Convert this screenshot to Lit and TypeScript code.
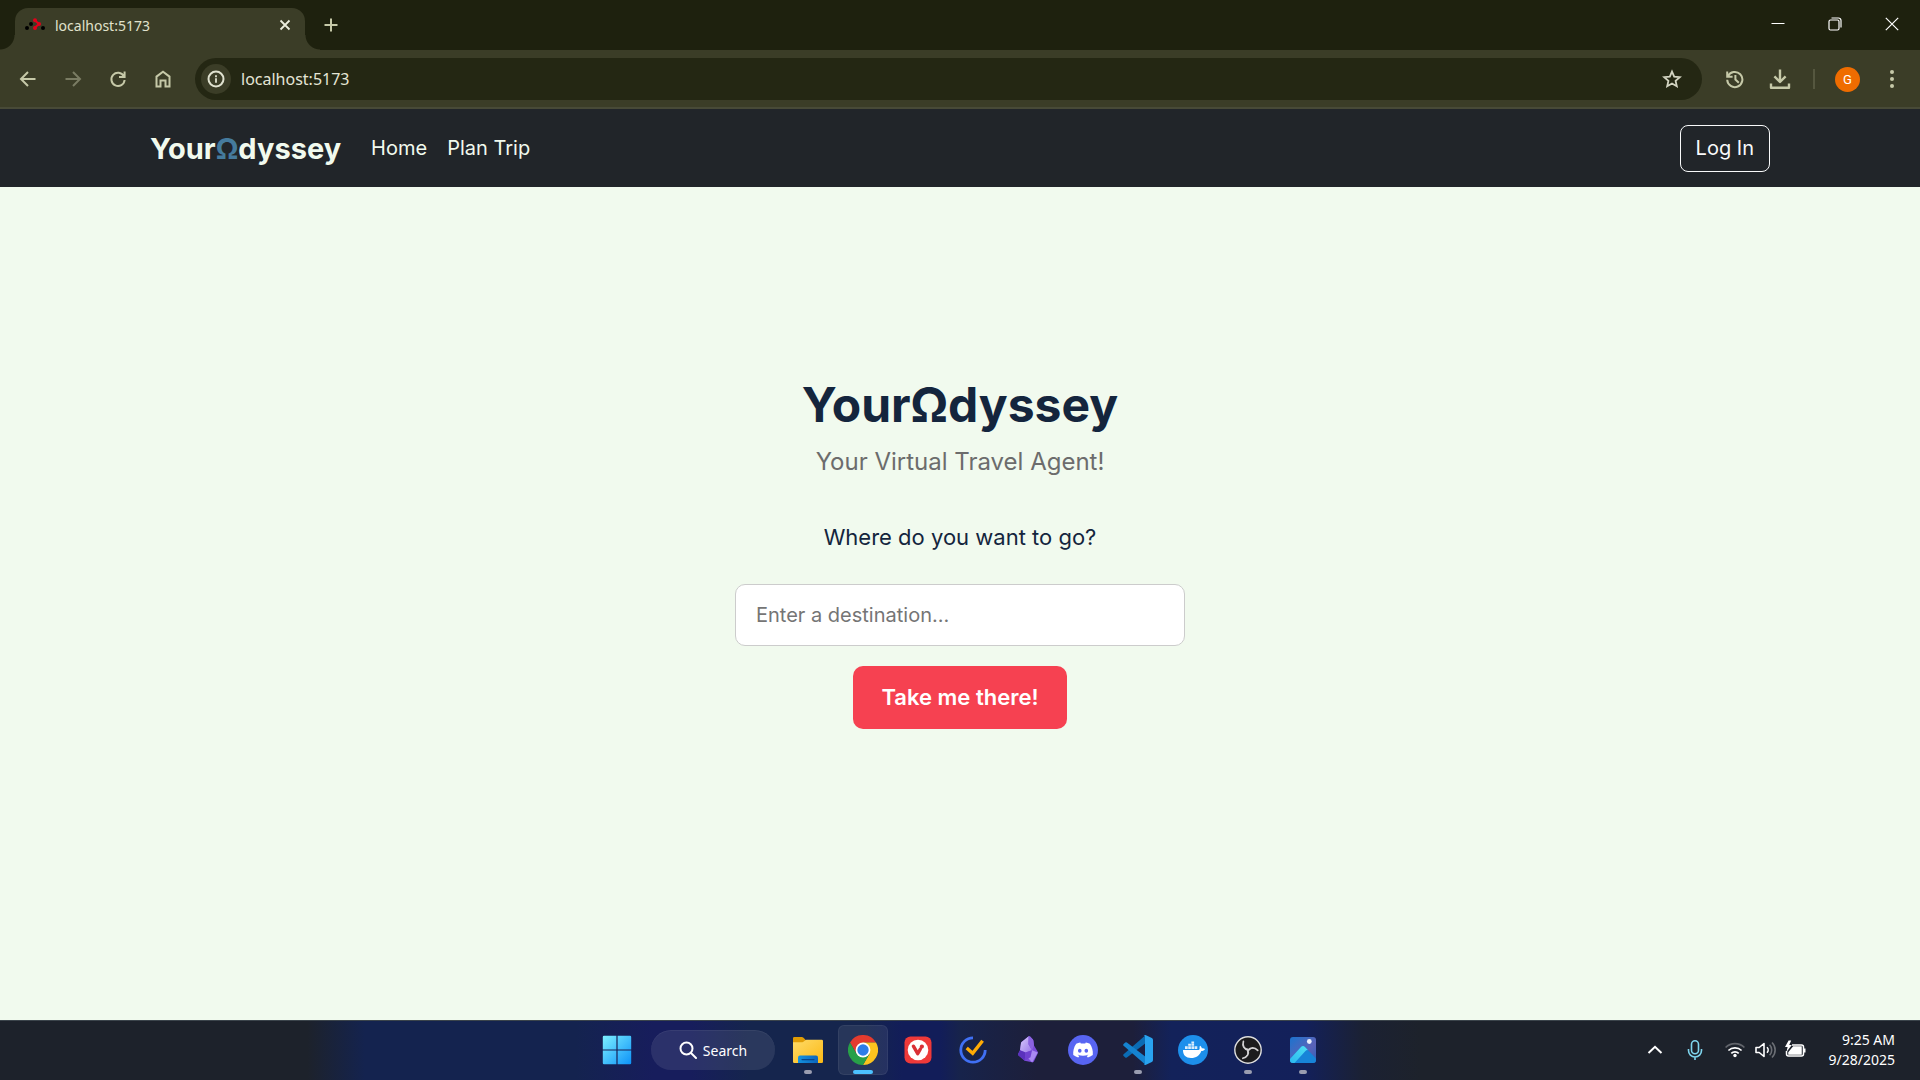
import { LitElement, html, css, svg } from "lit";
import { customElement } from "lit/decorators.js";
import { classMap } from "lit/directives/class-map.js";

/* ---------- line icons, drawn on a 20 or 24 unit grid ---------- */

const line = (size: number, body: unknown, width = 2) => html`
  <svg width=${size} height=${size} viewBox="0 0 ${size} ${size}" fill="none" stroke="currentColor"
    stroke-width=${width} aria-hidden="true">${body}</svg>`;

const icons = {
  tabClose: line(12, svg`<path d="M1.5 1.5l9 9M10.5 1.5l-9 9"/>`, 1.8),
  plus: line(14, svg`<path d="M7 .5v13M.5 7h13"/>`),
  back: line(20, svg`<path d="M17.5 10H3.5M10 3l-7 7 7 7"/>`),
  forward: line(20, svg`<path d="M2.5 10h14M10 3l7 7-7 7"/>`),
  reload: line(20, svg`<path d="M16.6 2.5v5.6H11M15.8 7.2A6.6 6.6 0 1 0 16.6 11"/>`),
  home: line(20, svg`<path d="M3.5 17.5V7.6L10 2.7l6.500 4.900v9.900h-4v-6h-5v6z"/>`),
  info: line(20, svg`<circle cx="10" cy="10" r="7.5"/><path d="M10 9.2v4.600M10 6.200v2" stroke-width="1.800"/>`),
  star: line(20, svg`<path d="M10 2.600l2.200 5.100 5.600.500-4.200 3.700 1.200 5.400-4.800-2.800-4.800 2.800 1.200-5.400-4.200-3.700 5.600-.5z" stroke-width="1.800"/>`),
  history: line(20, svg`<path d="M2.200 2.400v5.300h5.400M2.900 7.300A7.600 7.600 0 1 1 2.200 10.800M10.400 6v4.600l3.400 3.200"/>`),
  download: line(24, svg`<path d="M12 2.500v12M6.400 9.400L12 15l5.600-5.600M3 16.500v4.200h18v-4.200" stroke-width="2.400" stroke-linejoin="round"/>`),
  dots: html`<svg width="6" height="20" viewBox="0 0 6 20" fill="currentColor" aria-hidden="true">
    <circle cx="3" cy="3" r="2"/><circle cx="3" cy="10" r="2"/><circle cx="3" cy="17" r="2"/></svg>`,
  minimize: line(14, svg`<path d="M.5 6.500h13"/>`, 1),
  restore: line(14, svg`<rect x="1" y="3" width="10" height="10" rx="1.500"/><path d="M3.500 1h7A2.500 2.500 0 0 1 13 3.500v7"/>`, 1.2),
  close: line(14, svg`<path d="M.8.800l12.400 12.400M13.200.800L.8 13.200"/>`, 1.2),
  search: line(18, svg`<circle cx="7.500" cy="7.500" r="6"/><path d="M12 12l5 5" stroke-linecap="round"/>`),
  chevron: line(24, svg`<path d="M5.500 15L12 8.800l6.500 6.200"/>`),
  mic: line(24, svg`<rect x="8.500" y="2.800" width="7" height="13" rx="3.500"/><path d="M5.500 11v1.500a6.500 6.500 0 0 0 13 0V11M12 19v3"/>`, 1.6),
  wifi: line(24, svg`
    <path d="M2.600 9.500a13.300 13.300 0 0 1 18.800 0" opacity=".3"/>
    <path d="M5.400 12.500a9.400 9.400 0 0 1 13.200 0M8.300 15.300a5.300 5.300 0 0 1 7.400 0"/>
    <circle cx="12" cy="17.500" r="1.700" fill="currentColor" stroke="none"/>`, 1.7),
  speaker: line(24, svg`
    <path d="M3 9.500h3.200l4.800-4v13l-4.800-4H3z" stroke-linejoin="round"/>
    <path d="M14 9.200a4 4 0 0 1 0 5.600"/>
    <path d="M16.600 6.800a7.400 7.400 0 0 1 0 10.400M19 4.500a10.500 10.500 0 0 1 0 15" opacity=".35"/>`, 1.6),
  battery: line(24, svg`
    <path d="M9 7h9.500a2 2 0 0 1 2 2v7a2 2 0 0 1-2 2H5.500a2 2 0 0 1-2-2v-3"/>
    <path d="M10.500 9h7.500v7H6v-1.500z" fill="currentColor"/>
    <path d="M21.500 10.500v4" stroke-width="2"/>
    <path d="M5.600 2.500L2 9h2.600L3.500 14 8.800 7H6.200l2-4.500z" fill="currentColor" stroke="none"/>`, 1.5),
};

/* ---------- colour logos, drawn on a 30 unit grid ---------- */

const logo = (body: unknown) => html`
  <svg width="30" height="30" viewBox="0 0 30 30" aria-hidden="true">${body}</svg>`;

const chromePiece = "M15 7.500H28A15 15 0 0 0 2 7.500L8.500 18.750 15 15z";
const obsBlade = "M15 15.200C11 14.500 8.600 10.500 10.900 6.200 9.500 11 12 13.400 15.600 13.700z";

const logos = {
  windows: logo(svg`
    <defs><linearGradient id="w" x1="0" y1="0" x2="1" y2="1" gradientUnits="objectBoundingBox">
      <stop offset="0" stop-color="#7df0ff"/><stop offset="1" stop-color="#0d92f8"/></linearGradient></defs>
    <path fill="url(#w)" d="M.8 2Q.8.800 2 .800h12.400v13.600H.800zM15.600.800H28q1.200 0 1.200 1.200v12.400H15.600zM.8 15.600h13.600v13.600H2Q.800 29.200.800 28zM15.600 15.600h13.600V28q0 1.200-1.200 1.200H15.600z"/>`),
  files: logo(svg`
    <defs>
      <linearGradient id="f" x1="0" y1="0" x2="1" y2="1"><stop offset="0" stop-color="#ffdb68"/><stop offset="1" stop-color="#fbb915"/></linearGradient>
      <linearGradient id="fb" x1="0" y1="0" x2="1" y2="0"><stop offset="0" stop-color="#1493e0"/><stop offset="1" stop-color="#0c64bd"/></linearGradient>
    </defs>
    <path fill="#e09c05" d="M0 3.300Q0 2 1.300 2h7.500q1 0 1.700.700L13 5.200 11 9H0z"/>
    <path fill="url(#f)" d="M0 7.200h9.200q.9 0 1.500-.6L12 5.400q.6-.6 1.500-.6h15.200q1.300 0 1.300 1.300v20.600q0 1.300-1.300 1.300H1.300Q0 28 0 26.700z"/>
    <path fill="url(#fb)" d="M5 28v-5.500Q5 20.500 7 20.500h16q2 0 2 2V28z"/>
    <path d="M9 24.600h12" stroke="#07458c" stroke-width="1.200" stroke-linecap="round"/>`),
  chrome: logo(svg`
    <path fill="#e33b2e" d=${chromePiece}/>
    <path fill="#fcc31e" d=${chromePiece} transform="rotate(120 15 15)"/>
    <path fill="#28a048" d=${chromePiece} transform="rotate(240 15 15)"/>
    <circle cx="15" cy="15" r="7.400" fill="#fff"/><circle cx="15" cy="15" r="5.700" fill="#2c7de9"/>`),
  vivaldi: logo(svg`
    <rect x="1.500" y="1.500" width="27" height="27" rx="6" fill="#ef3939"/>
    <circle cx="15" cy="15" r="10.300" fill="#fff"/>
    <path d="M10.400 11.200l4.300 7.500 2.700-4.700" fill="none" stroke="#d92f35" stroke-width="3.400" stroke-linecap="round" stroke-linejoin="round"/>
    <circle cx="18.900" cy="11.600" r="2.100" fill="#d92f35"/>`),
  ticktick: logo(svg`
    <path d="M15 2.800a12.200 12.200 0 1 0 12.200 12.200" fill="none" stroke="#4070f4" stroke-width="2.800"/>
    <path d="M8.700 13l6 5.200L24.600 5.800" fill="none" stroke="#ffab05" stroke-width="3.400"/>`),
  obsidian: logo(svg`
    <defs><linearGradient id="o" x1="0" y1="0" x2="1" y2="1"><stop offset="0" stop-color="#d9ccfb"/><stop offset="1" stop-color="#9a78ea"/></linearGradient></defs>
    <path fill="#7a4bd8" d="M15.700 1.300q.8-.3 1.400.3l2.600 2.600q.6.600.7 1.500l.6 4.800 3.700 6.300q.5.800 0 1.700l-3.700 7.800q-.5 1.300-1.900 1L11.700 25.700 5.300 20.300q-.6-.6-.2-1.300L7 15.300l1-7.200q.1-.7.600-1.200z"/>
    <path fill="url(#o)" d="M15.700 1.300L8.600 6.900q-.5.500-.6 1.200L7 15.300l5.500 2.200 6.500-2.300-3.500-6z"/>
    <path fill="#8b63e0" d="M15.700 1.300q.8-.3 1.400.3l2.600 2.600q.6.600.7 1.500l.6 4.800-2 4.700-3.500-6z"/>
    <path fill="#5a32bd" d="M7 15.300l5.500 2.200-.8 8.200-6.400-5.400q-.6-.6-.2-1.300z"/>
    <path fill="#a98af2" d="M19 15.200l5.800 2.300-5.600 9.900-4.700-5z"/>
    <path fill="#7042d0" d="M12.500 17.500l6.500-2.300-1.500 7-5.800 3.500z"/>`),
  discord: logo(svg`
    <circle cx="15" cy="15" r="15" fill="#5865f2"/>
    <path fill="#fff" transform="translate(5.200 5.200) scale(.82)" d="M20.317 4.370a19.791 19.791 0 00-4.885-1.515.074.074 0 00-.079.037c-.211.375-.445.865-.608 1.250-1.845-.276-3.680-.276-5.487 0-.164-.393-.406-.874-.618-1.250a.077.077 0 00-.079-.037 19.736 19.736 0 00-4.885 1.515.070.070 0 00-.032.028C.533 9.046-.319 13.580.099 18.058a.082.082 0 00.031.056c2.053 1.508 4.041 2.423 5.993 3.029a.078.078 0 00.084-.028c.462-.630.873-1.295 1.226-1.994a.076.076 0 00-.042-.106c-.653-.248-1.274-.550-1.872-.892a.077.077 0 01-.008-.128c.126-.094.252-.192.372-.291a.074.074 0 01.078-.011c3.928 1.793 8.180 1.793 12.061 0a.074.074 0 01.079.010c.120.099.246.198.373.292a.077.077 0 01-.007.128 12.299 12.299 0 01-1.873.891.077.077 0 00-.041.107c.360.698.772 1.363 1.225 1.993a.076.076 0 00.084.029c1.961-.607 3.950-1.522 6.002-3.029a.077.077 0 00.031-.055c.500-5.177-.838-9.674-3.549-13.660a.061.061 0 00-.031-.029zM8.020 15.331c-1.183 0-2.157-1.086-2.157-2.419s.956-2.419 2.157-2.419c1.211 0 2.176 1.095 2.157 2.419 0 1.333-.956 2.419-2.157 2.419zm7.975 0c-1.183 0-2.157-1.086-2.157-2.419s.955-2.419 2.157-2.419c1.211 0 2.176 1.095 2.157 2.419 0 1.333-.946 2.419-2.157 2.419z"/>`),
  vscode: logo(svg`
    <path fill="#0b6cb4" d="M.6 19.200q-.9.800 0 1.700l1.600 1.500q.8.700 1.700 0L22.500 8.300V.300z"/>
    <path fill="#1583d0" d="M.6 10.800q-.9-.8 0-1.700l1.600-1.500q.8-.7 1.700 0L22.500 21.700v8z"/>
    <path fill="#29a3f0" d="M22.500 0l6.300 3q1.200.600 1.200 2v20q0 1.400-1.200 2l-6.300 3q-1.100 0-1.800-.700 1.300.300 1.300-1V1.700q0-1.300-1.300-1Q21.400 0 22.500 0z"/>`),
  docker: logo(svg`
    <circle cx="15" cy="15" r="15" fill="#1d8feb"/>
    <path fill="#fff" d="M5 15h15.600c.9-.3 1.200-1 1-2-.2-.8 0-1.600.5-2.300 1 .7 1.600 1.500 1.700 2.500 1.200-.2 2.300 0 3.200.700-.7 1.500-2 2-3.700 2-1.800 4.700-5 7-10.300 7-5 0-8-2.400-8-7.900z"/>
    <path fill="#fff" d="M7 11.200h2.700v2.800H7zM10.200 11.200h2.700v2.800h-2.700zM13.400 11.200h2.700v2.800h-2.700zM16.600 11.200h2.700v2.800h-2.700zM10.200 8.800h2.700v2h-2.700zM13.400 8.800h2.700v2h-2.700zM13.400 6.400h2.700v2h-2.700z" opacity=".85"/>`),
  obs: logo(svg`
    <circle cx="15" cy="15" r="13.200" fill="#1c1b1d" stroke="#dedede" stroke-width="1.400"/>
    <g fill="none" stroke="#d2d0d2" stroke-width="1.700" stroke-linecap="round">
      ${[0, 120, 240].map((a) => svg`<path transform="rotate(${a} 15 15)" d="M15 14.800c-3.800-.6-6-3.900-4.600-8.400"/>
      <path transform="rotate(${a} 15 15)" fill="#d2d0d2" stroke="none" d=${obsBlade}/>`)}
    </g>`),
  photos: logo(svg`
    <defs>
      <linearGradient id="p" x1="0" y1="0" x2="1" y2="1"><stop offset="0" stop-color="#1b74cf"/><stop offset=".6" stop-color="#5b62b8"/><stop offset="1" stop-color="#2d62bd"/></linearGradient>
      <linearGradient id="q" x1="0" y1="1" x2="1" y2="0"><stop offset="0" stop-color="#2bb8ee"/><stop offset="1" stop-color="#50e0f5"/></linearGradient>
      <clipPath id="pc"><rect x="2" y="2" width="26" height="26" rx="3"/></clipPath>
    </defs>
    <g clip-path="url(#pc)">
      <rect x="2" y="2" width="26" height="26" fill="url(#p)"/>
      <path fill="#1784d8" d="M2 24L13 12q2-2 4 0l11 11.500V28H2z"/>
      <path fill="url(#q)" d="M2 24L13 12q2-2 4 0l3 3.200q-1.500-.4-2.800 1L6.500 28H2z"/>
      <circle cx="21.300" cy="6.500" r="2.400" fill="#eceffc"/>
    </g>`),
};

const favicon = html`
  <svg width="20" height="14" viewBox="0 0 20 14" aria-hidden="true">
    <circle cx="2" cy="10" r="2"/><circle cx="6" cy="6" r="2"/><circle cx="18" cy="10" r="2"/>
    <g fill="#e0021b"><circle cx="10" cy="2.200" r="2"/><circle cx="14" cy="6" r="2"/><circle cx="10" cy="10" r="2"/></g>
    <path d="M10 2.500l4 3.500-4 3.500" fill="none" stroke="#e0021b" stroke-width="2"/>
  </svg>`;

const buttonReset = css`
  :host, * { box-sizing: border-box; }
  button {
    display: inline-flex;
    align-items: center;
    justify-content: center;
    padding: 0;
    border: 0;
    background: none;
    color: inherit;
    font: inherit;
  }
  svg { display: block; flex: none; }
`;

/* ---------- browser window frame ---------- */

@customElement("browser-frame")
export class BrowserFrame extends LitElement {
  static styles = [
    buttonReset,
    css`
      :host {
        display: block;
        font-family: "Noto Sans", "Open Sans", sans-serif;
        color: #c6c9a8;
      }
      .strip {
        display: flex;
        align-items: center;
        height: 50px;
        padding-left: 15px;
        background: #1e210e;
      }
      .tab {
        position: relative;
        display: flex;
        align-items: center;
        align-self: flex-end;
        gap: 10px;
        width: 290px;
        height: 42px;
        padding: 0 10px 8px;
        border-radius: 13px 13px 0 0;
        background: #3b3d27;
        color: #e0e2cc;
        font-size: 14px;
      }
      .tab::before,
      .tab::after {
        content: "";
        position: absolute;
        bottom: 0;
        width: 15px;
        height: 15px;
      }
      .tab::before {
        right: 100%;
        background: radial-gradient(circle at 0 0, transparent 14px, #3b3d27 15px);
      }
      .tab::after {
        left: 100%;
        background: radial-gradient(circle at 100% 0, transparent 14px, #3b3d27 15px);
      }
      .title { flex: 1; }
      .tab-close { width: 20px; height: 20px; color: #eceedd; }
      .new-tab { width: 36px; height: 36px; margin-left: 8px; }
      .window { display: flex; margin-left: auto; height: 100%; color: #fff; }
      .window button { width: 57px; padding-bottom: 2px; }
      .toolbar {
        display: flex;
        align-items: center;
        height: 59px;
        padding: 1px 10px 0;
        border-bottom: 2px solid #484a37;
        background: #3b3d27;
      }
      .group { display: flex; gap: 9px; }
      .tool { width: 36px; height: 36px; }
      .tool[disabled] { color: #7a7c63; }
      .address {
        flex: 1;
        display: flex;
        align-items: center;
        height: 42px;
        margin: 0 15px 0 14px;
        padding: 0 12px 0 6px;
        border-radius: 21px;
        background: #242713;
      }
      .site { width: 30px; height: 30px; border-radius: 50%; background: #3b3d27; color: #e0e2d0; }
      .url {
        flex: 1;
        min-width: 0;
        margin-left: 10px;
        padding: 0;
        border: 0;
        outline: 0;
        background: none;
        color: #e4e5d6;
        font: 16px "Noto Sans", "Open Sans", sans-serif;
      }
      .star { color: #d3d4c2; }
      .rule { width: 2px; height: 20px; margin: 0 20px 0 15px; background: #55573f; }
      .avatar {
        width: 25px;
        height: 25px;
        border-radius: 50%;
        background: #ef6c00;
        color: #fff;
        font: 13px Roboto, sans-serif;
      }
      .more { margin-left: 14px; }
    `,
  ];

  render() {
    return html`
      <div class="strip">
        <div class="tab">
          ${favicon}
          <span class="title">localhost:5173</span>
          <button class="tab-close" aria-label="Close tab">${icons.tabClose}</button>
        </div>
        <button class="new-tab" aria-label="New tab">${icons.plus}</button>
        <div class="window">
          <button aria-label="Minimize">${icons.minimize}</button>
          <button aria-label="Restore">${icons.restore}</button>
          <button aria-label="Close">${icons.close}</button>
        </div>
      </div>
      <div class="toolbar">
        <div class="group">
          <button class="tool" aria-label="Back">${icons.back}</button>
          <button class="tool" aria-label="Forward" disabled>${icons.forward}</button>
          <button class="tool" aria-label="Reload">${icons.reload}</button>
          <button class="tool" aria-label="Home">${icons.home}</button>
        </div>
        <div class="address">
          <button class="site" aria-label="Site information">${icons.info}</button>
          <input class="url" type="text" aria-label="Address" .value=${"localhost:5173"} />
          <button class="tool star" aria-label="Bookmark">${icons.star}</button>
        </div>
        <div class="group">
          <button class="tool" aria-label="History">${icons.history}</button>
          <button class="tool" aria-label="Downloads">${icons.download}</button>
        </div>
        <span class="rule"></span>
        <button class="avatar" aria-label="Profile G">G</button>
        <button class="tool more" aria-label="Menu">${icons.dots}</button>
      </div>
    `;
  }
}

/* ---------- the travel site ---------- */

@customElement("odyssey-page")
export class OdysseyPage extends LitElement {
  static styles = [
    buttonReset,
    css`
      :host {
        flex: 1;
        display: flex;
        flex-direction: column;
        background: #f1faee;
        font-family: Inter, sans-serif;
        font-size: 20px;
        color: #1d3557;
      }
      a { color: #f1faee; text-decoration: none; }
      .navbar { background: #212529; }
      .container {
        display: flex;
        align-items: center;
        max-width: 1650px;
        height: 78px;
        margin: 0 auto;
        padding: 0 15px;
      }
      .brand { margin-right: 30px; font-size: 29px; font-weight: 700; }
      .omega { color: #457b9d; }
      .links { display: flex; gap: 20px; }
      .login {
        margin-left: auto;
        padding: 7px 15px;
        border: 1px solid #f8f9fa;
        border-radius: 8px;
        color: #f8f9fa;
        line-height: 31px;
      }
      .hero {
        display: flex;
        flex-direction: column;
        align-items: center;
        padding: 188px 20px 40px;
        text-align: center;
      }
      h1 { margin: 0; font-size: 48px; line-height: 60px; font-weight: 700; color: #14253d; }
      .lead { margin: 8px 0 39px; font-size: 24px; line-height: 38px; color: #6c6c6c; }
      form { display: flex; flex-direction: column; align-items: center; width: 100%; }
      label { font-size: 22px; line-height: 34px; color: #14253d; }
      .destination {
        width: 100%;
        max-width: 450px;
        height: 62px;
        margin: 30px 0 20px;
        padding: 0 20px;
        border: 1px solid #ccc;
        border-radius: 10px;
        background: #fff;
        color: #14253d;
        font: 20px Inter, sans-serif;
      }
      .destination::placeholder { color: #757575; }
      .go {
        height: 63px;
        padding: 0 28px 2px;
        border-radius: 10px;
        background: #f64151;
        color: #fff;
        font-size: 22px;
        font-weight: 600;
      }
    `,
  ];

  render() {
    return html`
      <nav class="navbar">
        <div class="container">
          <a class="brand" href="#">Your<span class="omega">Ω</span>dyssey</a>
          <div class="links">
            <a href="#">Home</a>
            <a href="#plan">Plan Trip</a>
          </div>
          <button class="login">Log In</button>
        </div>
      </nav>
      <main class="hero">
        <h1>YourΩdyssey</h1>
        <p class="lead">Your Virtual Travel Agent!</p>
        <form @submit=${(e: Event) => e.preventDefault()}>
          <label for="destination">Where do you want to go?</label>
          <input class="destination" id="destination" type="text" placeholder="Enter a destination..." />
          <button class="go" type="submit">Take me there!</button>
        </form>
      </main>
    `;
  }
}

/* ---------- desktop taskbar ---------- */

type App = { name: string; art: unknown; open?: boolean; active?: boolean };

const apps: App[] = [
  { name: "File Explorer", art: logos.files, open: true },
  { name: "Chrome", art: logos.chrome, open: true, active: true },
  { name: "Vivaldi", art: logos.vivaldi },
  { name: "TickTick", art: logos.ticktick },
  { name: "Obsidian", art: logos.obsidian },
  { name: "Discord", art: logos.discord },
  { name: "VS Code", art: logos.vscode, open: true },
  { name: "Docker", art: logos.docker },
  { name: "OBS Studio", art: logos.obs, open: true },
  { name: "Photos", art: logos.photos, open: true },
];

@customElement("task-bar")
export class TaskBar extends LitElement {
  static styles = [
    buttonReset,
    css`
      :host {
        display: grid;
        grid-template-columns: 1fr auto 1fr;
        align-items: center;
        height: 60px;
        box-shadow: inset 0 1px 0 #3b444b;
        background: linear-gradient(90deg,
          #1d222b 0, #1d222b 16%, #14234f 19%, #14234f 30%, #171d5c 34%, #171d5c 36%,
          #15254d 39%, #15254d 45%, #121d59 47%, #121d59 49%, #17234b 50%, #1d1f3a 54%,
          #1d1f3a 59%, #13225a 61%, #13205a 68%, #1b2133 71%, #1d222b 74%);
        color: #fff;
        font-family: "Noto Sans", "Open Sans", sans-serif;
        font-size: 14px;
      }
      .dock { grid-column: 2; display: flex; align-items: center; gap: 5px; }
      .app { position: relative; width: 50px; height: 50px; border-radius: 6px; }
      .app.active { background: rgba(255, 255, 255, 0.08); box-shadow: inset 0 0 0 1px rgba(255, 255, 255, 0.06); }
      .app.open::after {
        content: "";
        position: absolute;
        bottom: 1px;
        left: 50%;
        width: 8px;
        height: 4px;
        margin-left: -4px;
        border-radius: 2px;
        background: #9a9db0;
      }
      .app.active::after { width: 20px; margin-left: -10px; background: #4cc2ff; }
      .search {
        gap: 6px;
        width: 124px;
        height: 40px;
        margin: 0 3px 0 4px;
        border-radius: 20px;
        background: rgba(255, 255, 255, 0.09);
        box-shadow: inset 0 1px 0 rgba(255, 255, 255, 0.06);
      }
      .tray { display: flex; align-items: center; justify-content: flex-end; gap: 16px; padding-right: 25px; }
      .status { gap: 6px; }
      .mic { color: #7fd6ee; }
      .clock { display: block; min-width: 72px; line-height: 20px; text-align: right; white-space: nowrap; }
      .clock span { display: block; }
    `,
  ];

  render() {
    return html`
      <div class="dock">
        <button class="app" aria-label="Start">${logos.windows}</button>
        <button class="search">${icons.search}<span>Search</span></button>
        ${apps.map(
          (app) => html`
            <button class=${classMap({ app: true, open: !!app.open, active: !!app.active })} aria-label=${app.name}>
              ${app.art}
            </button>
          `,
        )}
      </div>
      <div class="tray">
        <button aria-label="Show hidden icons">${icons.chevron}</button>
        <button class="mic" aria-label="Microphone in use">${icons.mic}</button>
        <button class="status" aria-label="Network, sound and battery">
          ${icons.wifi}${icons.speaker}${icons.battery}
        </button>
        <button class="clock"><span>9:25 AM</span><span>9/28/2025</span></button>
      </div>
    `;
  }
}

@customElement("app-root")
export class AppRoot extends LitElement {
  static styles = css`
    :host {
      display: flex;
      flex-direction: column;
      min-height: 100vh;
    }
  `;

  render() {
    return html`
      <browser-frame></browser-frame>
      <odyssey-page></odyssey-page>
      <task-bar></task-bar>
    `;
  }
}
